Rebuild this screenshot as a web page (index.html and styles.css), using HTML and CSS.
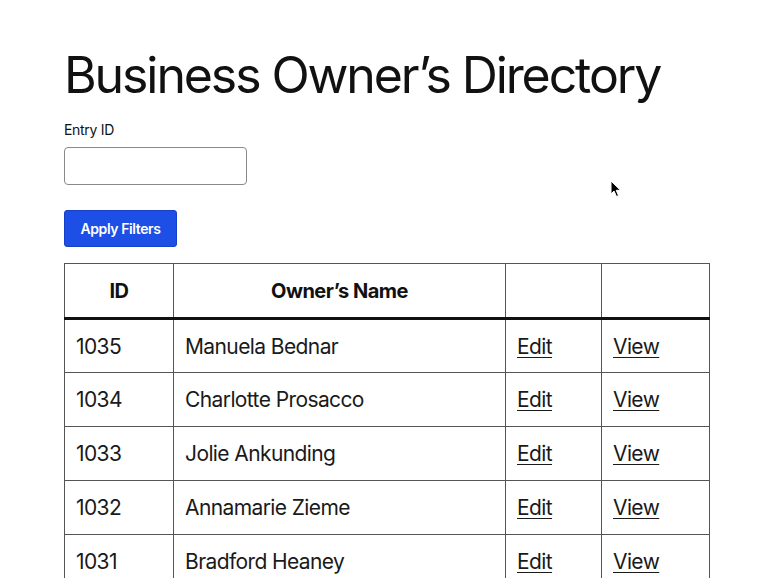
FILE: index.html
```html
<!DOCTYPE html>
<html lang="en">
<head>
    <meta charset="UTF-8">
    <meta name="viewport" content="width=device-width, initial-scale=1.0">
    <title>Business Owner's Directory</title>
    <link rel="stylesheet" href="styles.css">
</head>
<body>
    <main class="page">
        <h1 class="title">Business Owner’s Directory</h1>

        <form class="filters">
            <label class="field-label" for="entry-id">Entry ID</label>
            <input class="field-input" id="entry-id" type="text">
            <button class="apply-btn" type="button">Apply Filters</button>
        </form>

        <table class="owners">
            <thead>
                <tr>
                    <th class="col-id">ID</th>
                    <th class="col-name">Owner’s Name</th>
                    <th class="col-edit"></th>
                    <th class="col-view"></th>
                </tr>
            </thead>
            <tbody>
                <tr><td>1035</td><td>Manuela Bednar</td><td><a href="#">Edit</a></td><td><a href="#">View</a></td></tr>
                <tr><td>1034</td><td>Charlotte Prosacco</td><td><a href="#">Edit</a></td><td><a href="#">View</a></td></tr>
                <tr><td>1033</td><td>Jolie Ankunding</td><td><a href="#">Edit</a></td><td><a href="#">View</a></td></tr>
                <tr><td>1032</td><td>Annamarie Zieme</td><td><a href="#">Edit</a></td><td><a href="#">View</a></td></tr>
                <tr><td>1031</td><td>Bradford Heaney</td><td><a href="#">Edit</a></td><td><a href="#">View</a></td></tr>
            </tbody>
        </table>
    </main>

    <!-- mouse pointer captured in the screenshot -->
    <svg class="cursor" width="12" height="18" viewBox="0 0 12 18">
        <path d="M1 1 L1 14 L4 11 L6.5 16.5 L8.5 15.6 L6.2 10.3 L10.5 10.3 Z" fill="#000" stroke="#fff" stroke-width="1"/>
    </svg>
</body>
</html>
```

FILE: styles.css
```css
body {
    margin: 0;
    padding: 0;
    font-family: Inter, "Noto Sans", sans-serif;
    color: #111;
    background: #fff;
    overflow: hidden;
}
.page {
    padding: 44px 64px 0 64px;
}
.title {
    margin: 0;
    font-size: 50px;
    font-weight: 400;
    letter-spacing: -2.1px;
    line-height: 62px;
}
.filters {
    display: flex;
    flex-direction: column;
    align-items: flex-start;
    margin-top: 15px;
}
.field-label {
    font-size: 14px;
    letter-spacing: -0.3px;
    line-height: 18px;
}
.field-input {
    margin-top: 8px;
    width: 183px;
    height: 38px;
    box-sizing: border-box;
    border: 1px solid #8a8a8a;
    border-radius: 4px;
}
.apply-btn {
    margin-top: 25px;
    width: 113px;
    height: 37px;
    background-color: #1d4ee6;
    color: #fff;
    border: 1px solid #1640c8;
    border-radius: 3px;
    font-family: Inter, sans-serif;
    font-size: 14px;
    font-weight: 600;
    letter-spacing: -0.4px;
}
.owners {
    margin-top: 16px;
    width: 645px;
    border-collapse: collapse;
    table-layout: fixed;
}
.owners th, .owners td {
    border: 1px solid #555;
    padding: 0 11px;
    height: 54px;
    box-sizing: border-box;
}
.owners th {
    height: 55px;
    font-size: 20px;
    font-weight: 700;
    letter-spacing: -0.5px;
    border-bottom: 3px solid #111;
}
.owners td {
    font-size: 21px;
    letter-spacing: -0.6px;
    font-weight: 400;
    color: #1a1a1a;
}
.col-id { width: 109px; }
.col-name { width: 332px; }
.col-edit { width: 96px; }
.col-view { width: 108px; }
.owners a {
    color: #1a1a1a;
    text-decoration: underline;
    text-underline-offset: 3px;
    text-decoration-thickness: 1px;
}
.cursor {
    position: absolute;
    left: 610px;
    top: 180px;
}
```
